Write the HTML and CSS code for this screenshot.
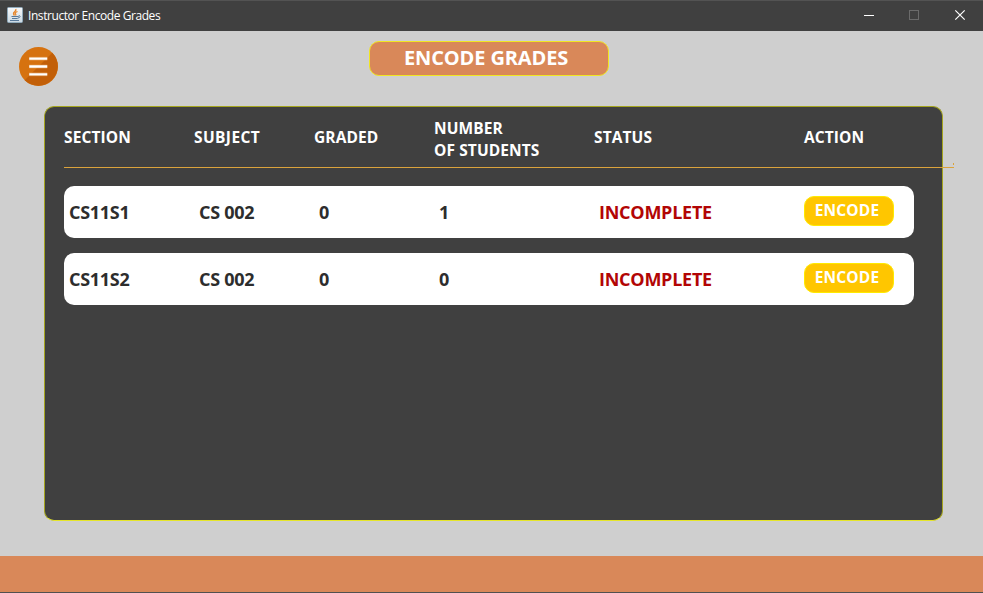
FILE: index.html
```html
<!DOCTYPE html>
<html lang="en">
<head>
<meta charset="utf-8">
<title>Instructor Encode Grades</title>
<link rel="stylesheet" href="styles.css">
</head>
<body>
<div class="window">
  <header class="titlebar">
    <svg class="app-icon" width="16" height="16" viewBox="0 0 16 16">
      <defs><linearGradient id="tile" x1="0" y1="0" x2="0" y2="1"><stop offset="0" stop-color="#f8f9fa"/><stop offset="1" stop-color="#cbd9e3"/></linearGradient></defs>
      <rect x=".5" y=".5" width="15" height="15" rx="1" fill="url(#tile)" stroke="#8fa9ba"/>
      <path d="M8.800 2C10 4 6 5 6.500 6.500Q6.700 7.500 7.500 8.500M10.500 4.500C8 5.500 7.700 6.500 8.700 7.300Q9 8 8.500 8.500" fill="none" stroke="#e7862b" stroke-width="1.300"/>
      <path d="M4.500 9.500H11M5 11.500H10.500M3 13.500H12M11 9.500Q13 8 13.200 9.300Q13 10.700 10.500 11.300" fill="none" stroke="#58799a"/>
    </svg>
    <span class="caption">Instructor Encode Grades</span>
    <svg class="controls" width="138" height="30" viewBox="0 0 138 30">
      <path d="M19 15.500h10" stroke="#fff"/>
      <rect x="64.500" y="10.500" width="9" height="9" fill="none" stroke="#6b6b6b"/>
      <path d="M110.300 10.300l9.400 9.400M119.700 10.300l-9.400 9.400" stroke="#fff" stroke-width="1.200"/>
    </svg>
  </header>
  <main class="content">
    <div class="top">
      <svg class="menu" width="40" height="40" viewBox="0 0 40 40">
        <circle cx="20" cy="20" r="20" fill="#d6720f"/>
        <path d="M34.140 5.860A20 20 0 0 1 5.860 34.140Z" fill="#c25f08"/>
        <path d="M10.500 12h18.500M10.500 20h18.500M10.500 28h18.500" stroke="#eca45c" stroke-width="4" opacity=".45"/>
        <path d="M10.500 12h18.500M10.500 20h18.500M10.500 28h18.500" stroke="#fff" stroke-width="2.400"/>
      </svg>
      <h1 class="title"><span>ENCODE GRADES</span></h1>
    </div>
    <section class="panel">
      <div class="grid head">
        <span>SECTION</span><span class="subject">SUBJECT</span><span>GRADED</span><span class="number">NUMBER<br>OF STUDENTS</span><span>STATUS</span><span>ACTION</span>
      </div>
      <div class="grid row">
        <span>CS11S1</span><span>CS 002</span><span>0</span><span>1</span><span class="status">INCOMPLETE</span><button class="encode">ENCODE</button>
      </div>
      <div class="grid row">
        <span>CS11S2</span><span>CS 002</span><span>0</span><span>0</span><span class="status">INCOMPLETE</span><button class="encode">ENCODE</button>
      </div>
    </section>
  </main>
  <footer class="footer"></footer>
</div>
</body>
</html>
```
FILE: styles.css
```css
* { box-sizing: border-box; }
body { margin: 0; font-family: "Open Sans", "Noto Sans", sans-serif; }
.window { display: flex; flex-direction: column; width: 983px; height: 593px; overflow: hidden; background: #cfcfcf; }
.titlebar { display: flex; align-items: center; height: 31px; flex: none; padding-left: 7px; background: #404040; border-top: 1px solid #535353; }
.app-icon { margin-right: 5px; margin-top: -2px; }
.caption { color: #fff; font-size: 12px; line-height: 16px; letter-spacing: -0.43px; margin-top: -1px; }
.controls { margin-left: auto; margin-top: -2px; }
.content { flex: 1; min-height: 0; }
.top { display: flex; height: 75px; padding-left: 19px; }
.menu { width: 39px; height: 39px; margin-top: 16px; }
.title { margin: 10px 0 0 311px; width: 240px; height: 35px; border: 1px solid #f0e622; border-radius: 10px; background: #d98859; color: #fff; font-size: 20px; line-height: 31px; font-weight: 700; padding-left: 34px; white-space: nowrap; letter-spacing: -0.13px; }
.panel { width: 899px; height: 415px; margin-left: 44px; padding-left: 19px; background: #404040; border: 1px solid #a5a51e; border-bottom-color: #e5e52a; border-radius: 10px; }
.grid { display: grid; grid-template-columns: 130px 120px 120px 160px 210px 1fr; align-items: center; font-weight: 700; white-space: nowrap; }
.head { position: relative; width: 890px; height: 61px; margin-bottom: 18px; border-bottom: 1px solid #dba33c; color: #fff; font-size: 15.5px; line-height: 22px; letter-spacing: 0.1px; padding-top: 3px; }
.head span { padding-bottom: 3px; }
.head .number { padding-bottom: 0; }
.head .subject { letter-spacing: 0.4px; }
/* small tick above the end of the divider */
.head::after { content: ""; position: absolute; right: 0; bottom: 2px; width: 1px; height: 2px; background: #dba33c; }
.row { width: 850px; height: 52px; margin-bottom: 15px; padding-left: 5px; border-radius: 10px; background: #fff; color: #2d2d2d; font-size: 18px; line-height: 24px; letter-spacing: -0.3px; }
.row .status { color: #b20505; letter-spacing: -0.25px; }
.encode { width: 90px; height: 30px; margin: -3px 0 0 -5px; padding: 0 4px 1px 0; border: 1px solid #ffea00; border-radius: 10px; background: #ffc600; color: #fff; font: 700 15.5px/20px "Open Sans", sans-serif; letter-spacing: 0.15px; }
.top .title { margin-left: 311px; }
.footer { height: 37px; flex: none; background: #d98859; border-bottom: 1px solid #505050; }
```
